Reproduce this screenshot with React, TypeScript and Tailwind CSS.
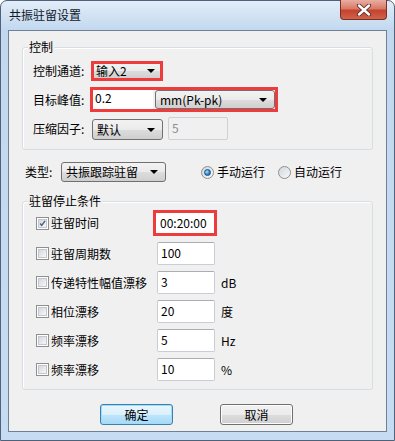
import React from "react";

const comboBg = "bg-[linear-gradient(#f2f2f2,#ebebeb_50%,#dddddd_51%,#cfcfcf)]";

const Arrow = () => (
  <span className="w-0 h-0 border-x-[4px] border-x-transparent border-t-[4px] border-t-black" />
);

const Combo = ({ text, className = "" }: { text: string; className?: string }) => (
  <div
    className={`flex items-center justify-between pl-[4px] pr-[7px] border border-[#707070] rounded-[3px] ${comboBg} ${className}`}
  >
    <span className="leading-none">{text}</span>
    <Arrow />
  </div>
);

const Edit = ({ text, className = "" }: { text: string; className?: string }) => (
  <div
    className={`bg-white border border-[#c9ced6] border-t-[#abadb3] rounded-[2px] pl-[3px] pt-[2px] leading-[16px] ${className}`}
  >
    {text}
  </div>
);

const CheckBox = ({ checked }: { checked?: boolean }) => (
  <div className="w-[13px] h-[13px] border border-[#8e8f8f] bg-white p-[1px] shrink-0">
    <div className="relative w-full h-full border border-[#c4c8ce] bg-[linear-gradient(135deg,#d4d8de,#f7f7f8)]">
      {checked && (
        <svg viewBox="0 0 9 9" className="absolute inset-0 w-full h-full">
          <path d="M1.5 4.5 L3.5 7 L7.8 1.2" fill="none" stroke="#4a5f86" strokeWidth="1.8" />
        </svg>
      )}
    </div>
  </div>
);

const Radio = ({ checked }: { checked?: boolean }) => (
  <div className="w-[13px] h-[13px] rounded-full border border-[#8e8f8f] bg-[linear-gradient(135deg,#d2d6dc,#f8f8f8)] flex items-center justify-center shrink-0">
    {checked && (
      <div className="w-[7px] h-[7px] rounded-full border border-[#1c4f7c] bg-[radial-gradient(circle_at_35%_35%,#a6e3ff,#2a8ad2_55%,#0f5592)]" />
    )}
  </div>
);

const Group = ({ title, className = "", children }: { title: string; className?: string; children: React.ReactNode }) => (
  <div
    className={`relative ml-[13px] w-[351px] border border-[#d5dfe5] rounded-[3px] shadow-[inset_1px_1px_0_#ffffff] ${className}`}
  >
    <span className="absolute -top-[9px] left-[5px] px-[1px] bg-[#f0f0f0] leading-[16px]">{title}</span>
    {children}
  </div>
);

const rows = [
  { label: "驻留周期数", value: "100", unit: "" },
  { label: "传递特性幅值漂移", value: "3", unit: "dB" },
  { label: "相位漂移", value: "20", unit: "度" },
  { label: "频率漂移", value: "5", unit: "Hz" },
  { label: "频率漂移", value: "10", unit: "%" },
];

export default function App() {
  return (
    <div className="w-[395px] h-[441px] bg-white text-[12px] text-black font-['Noto_Sans_CJK_SC','Noto_Sans',sans-serif]">
      <div className="w-full h-full flex flex-col rounded-t-[7px] border border-[#4f6279] bg-[linear-gradient(#e2edf8,#c2d8ef_29px,#c6dcf2)]">
        {/* title bar */}
        <div className="h-[29px] flex justify-between shrink-0">
          <span className="pl-[8px] pt-[6px] leading-[16px] text-[#10182a]">共振驻留设置</span>
          <div className="mr-[7px] -mt-[1px] w-[47px] h-[20px] rounded-b-[4px] border border-[#7a2f25] border-t-0 bg-[linear-gradient(#e9aea4,#d97a66_45%,#c5432f_55%,#d0634c)] flex items-center justify-center">
            <svg width="16" height="12" viewBox="0 0 16 12">
              <path d="M3 1.5 L13 10.5 M13 1.5 L3 10.5" stroke="#5a2a24" strokeWidth="4.2" strokeLinecap="round" />
              <path d="M3 1.5 L13 10.5 M13 1.5 L3 10.5" stroke="#ffffff" strokeWidth="2.4" strokeLinecap="round" />
            </svg>
          </div>
        </div>

        {/* client */}
        <div className="mx-[7px] h-[402px] border border-[#6f8196] bg-[#f0f0f0]">
          <Group title="控制" className="mt-[16px] h-[103px]">
            <div className="flex flex-col pt-[13px] pl-[10px]">
              <div className="flex items-center h-[20px]">
                <span className="w-[58px]">控制通道:</span>
                <div className="w-[72px] h-[20px] border-[3px] border-[#ee3b3b] flex">
                  <div className={`flex-1 flex items-center justify-between pl-[2px] pr-[5px] ${comboBg}`}>
                    <span className="leading-none">输入2</span>
                    <Arrow />
                  </div>
                </div>
              </div>
              <div className="flex items-center h-[25px] mt-[6px]">
                <span className="w-[57px]">目标峰值:</span>
                <div className="w-[188px] h-[25px] border-[3px] border-[#ee3b3b] flex">
                  <div className="w-[60px] h-full bg-white pl-[2px] leading-[16px]">0.2</div>
                  <Combo text="mm(Pk-pk)" className="ml-[2px] w-[120px] h-full" />
                </div>
              </div>
              <div className="flex items-end h-[23px] mt-[5px]">
                <span className="w-[59px] self-center">压缩因子:</span>
                <Combo text="默认" className="w-[71px] h-[21px]" />
                <div className="ml-[5px] w-[60px] h-[23px] border border-[#cdd0d4] rounded-[2px] pl-[3px] pt-[2px] leading-[16px] text-[#8d8d8d]">
                  5
                </div>
              </div>
            </div>
          </Group>

          {/* type row */}
          <div className="mt-[12px] h-[20px] flex items-center pl-[16px]">
            <span className="w-[36px]">类型:</span>
            <Combo text="共振跟踪驻留" className="w-[105px] h-[20px]" />
            <div className="ml-[35px] flex items-center gap-[3px]">
              <Radio checked />
              <span>手动运行</span>
            </div>
            <div className="ml-[13px] flex items-center gap-[3px]">
              <Radio />
              <span>自动运行</span>
            </div>
          </div>

          <Group title="驻留停止条件" className="mt-[19px] h-[189px]">
            <div className="flex flex-col pt-[8px] pl-[13px] gap-[6px]">
              <div className="flex items-center h-[26px]">
                <div className="w-[117px] flex items-center gap-[2px]">
                  <CheckBox checked />
                  <span>驻留时间</span>
                </div>
                <div className="w-[64px] h-[26px] border-[3px] border-[#ee3b3b] bg-white pl-[4px] pt-[2px] leading-[16px]">
                  00:20:00
                </div>
              </div>
              {rows.map((r, i) => (
                <div key={i} className="flex items-center h-[23px]">
                  <div className="w-[121px] flex items-center gap-[2px]">
                    <CheckBox />
                    <span>{r.label}</span>
                  </div>
                  <Edit text={r.value} className="w-[58px] h-[23px]" />
                  <span className="ml-[6px]">{r.unit}</span>
                </div>
              ))}
            </div>
          </Group>

          {/* buttons */}
          <div className="mt-[14px] flex pl-[91px] gap-[47px]">
            <button className="w-[73px] h-[21px] rounded-[3px] border border-[#3c7fb1] shadow-[inset_0_0_0_1px_#9fdcf8] bg-[linear-gradient(#eaf6fd,#d9f0fc_50%,#bee6fd_51%,#a7d9f5)] leading-none">
              确定
            </button>
            <button className="w-[73px] h-[21px] rounded-[3px] border border-[#707070] shadow-[inset_0_0_0_1px_#fcfcfc] bg-[linear-gradient(#f2f2f2,#ebebeb_50%,#dddddd_51%,#cfcfcf)] leading-none">
              取消
            </button>
          </div>
        </div>
      </div>
    </div>
  );
}
